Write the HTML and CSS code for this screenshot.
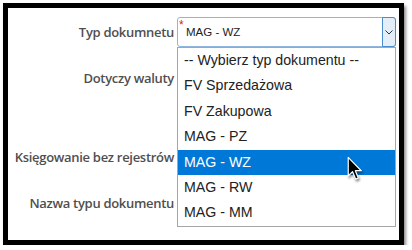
FILE: index.html
```html
<!DOCTYPE html>
<html lang="pl">
<head>
    <meta charset="UTF-8">
    <meta name="viewport" content="width=device-width, initial-scale=1.0">
    <title>Typ dokumentu</title>
    <link rel="stylesheet" href="styles.css">
</head>
<body>
    <div class="frame">
        <div class="form">
            <div class="row">
                <label class="label">Typ dokumnetu</label>
                <div class="field">
                    <div class="select">
                        <span class="req">*</span>
                        <span class="value">MAG - WZ</span>
                        <span class="arrow">
                            <svg width="8" height="5" viewBox="0 0 8 5"><path d="M0.5 0.5 L4 4 L7.5 0.5" fill="none" stroke="#333" stroke-width="1"/></svg>
                        </span>
                    </div>
                    <!-- rozwinieta lista -->
                    <ul class="list">
                        <li>-- Wybierz typ dokumentu --</li>
                        <li>FV Sprzedażowa</li>
                        <li>FV Zakupowa</li>
                        <li>MAG - PZ</li>
                        <li class="active">MAG - WZ</li>
                        <li>MAG - RW</li>
                        <li>MAG - MM</li>
                    </ul>
                    <svg class="cursor" width="16" height="25" viewBox="0 0 13 20">
                        <path d="M1 1 L1 16 L4.5 12.6 L7 18.6 L9.2 17.7 L6.8 11.8 L11.6 11.8 Z" fill="#000" stroke="#fff" stroke-width="1" stroke-linejoin="round"/>
                    </svg>
                </div>
            </div>
            <div class="row row-tall">
                <label class="label">Dotyczy waluty</label>
                <div class="field"></div>
            </div>
            <div class="row">
                <label class="label">Księgowanie bez rejestrów</label>
                <div class="field"></div>
            </div>
            <div class="row">
                <label class="label">Nazwa typu dokumentu</label>
                <div class="field"></div>
            </div>
        </div>
    </div>
</body>
</html>
```

FILE: styles.css
```css
body {
    margin: 0;
    background: #fff;
}

.frame {
    margin: 3px 0 0 3px;
    width: 391px;
    height: 232px;
    border: 5px solid #000;
    box-shadow: 2px 3px 3px rgba(0, 0, 0, 0.45);
    background: #fff;
}

.form {
    padding-top: 9px;
}

.row {
    display: flex;
    align-items: center;
    margin-bottom: 16px;
}

.row-tall {
    margin-bottom: 49px;
}

.label {
    width: 166px;
    text-align: right;
    font-family: "Open Sans", sans-serif;
    font-weight: 600;
    font-size: 13px;
    color: #4f4f4f;
    letter-spacing: -0.3px;
}

.field {
    position: relative;
    margin-left: 3px;
    width: 219px;
    height: 30px;
}

.select {
    position: relative;
    box-sizing: border-box;
    height: 30px;
    border: 1px solid #8fb6df;
    border-radius: 3px;
    display: flex;
    align-items: center;
    font-family: "Liberation Sans", Arial, sans-serif;
    font-size: 11.5px;
    color: #222;
}

.req {
    position: absolute;
    left: 1px;
    top: 2px;
    color: #d22;
    font-size: 12px;
    line-height: 10px;
}

.value {
    padding-left: 8px;
    flex: 1;
}

.arrow {
    box-sizing: border-box;
    width: 14px;
    height: 30px;
    margin: -1px -1px -1px 0;
    border: 1px solid #4a8ccc;
    border-radius: 0 3px 3px 0;
    background: #e3eef9;
    display: flex;
    align-items: center;
    justify-content: center;
}

.list {
    position: absolute;
    top: 30px;
    left: 0;
    width: 219px;
    box-sizing: border-box;
    margin: 0;
    padding: 0;
    list-style: none;
    border: 1px solid #a6a6a6;
    background: #fff;
    font-family: "Liberation Sans", Arial, sans-serif;
    font-size: 14.2px;
    color: #222;
    z-index: 2;
}

.list li {
    height: 25.4px;
    line-height: 25.4px;
    padding-left: 6px;
}

.list li.active {
    background: #0078d7;
    color: #fff;
}

.cursor {
    position: absolute;
    left: 170px;
    top: 139px;
    z-index: 3;
    filter: drop-shadow(1px 2px 1px rgba(0, 0, 0, 0.45));
}
```
